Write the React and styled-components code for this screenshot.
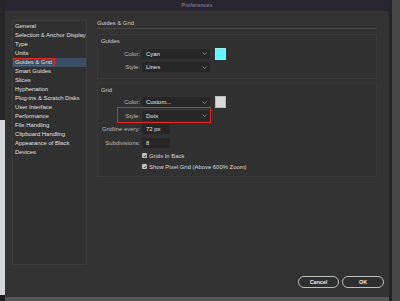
import React from "react";
import styled, { createGlobalStyle } from "styled-components";

const GlobalStyle = createGlobalStyle`
  html, body {
    margin: 0;
    padding: 0;
    background: #4a4a4a;
  }
  body {
    font-family: "Liberation Sans", Arial, sans-serif;
    font-size: 5.9px;
  }
`;

const Screen = styled.div`
  display: flex;
  width: 400px;
  height: 301px;
  overflow: hidden;
  background: #4a4a4a;
`;

const LeftEdge = styled.div`
  width: 5px;
  display: flex;
  flex-direction: column;

  & .dark {
    height: 120px;
    background: #262626;
  }
  & .light {
    flex: 1;
    background: #d4d5d8;
  }
  & .foot {
    height: 6px;
    background: #1d1d1d;
  }
`;

const Middle = styled.div`
  width: 384px;
  display: flex;
  flex-direction: column;
`;

const BottomStrip = styled.div`
  flex: 1;
  background: #555;
`;

const RightEdge = styled.div`
  flex: 1;
  border-left: 3px solid #242424;
  background: #474747;
`;

const Dialog = styled.div`
  height: 297px;
  display: flex;
  flex-direction: column;
  background: #323232;
`;

const TitleBar = styled.div`
  height: 11px;
  line-height: 11px;
  text-align: center;
  background: #2a2631;
  color: #756f80;
  font-weight: bold;
  font-size: 5.4px;
`;

const Body = styled.div`
  display: flex;
  padding: 9px 0 0 7px;
`;

const Sidebar = styled.ul`
  list-style: none;
  margin: 0;
  padding: 1px 0 0;
  width: 73px;
  height: 242px;
  border: 1px solid #3c3c3c;
  background: #303030;
`;

const NavItem = styled.li`
  position: relative;
  height: 9px;
  line-height: 9px;
  padding-left: 2px;
  color: #e0e0e0;
  white-space: nowrap;
  background: ${(p) => (p.$active ? "#3b4e64" : "transparent")};
`;

const Mark = styled.span`
  position: absolute;
  border: 1.5px solid #e2291f;
  pointer-events: none;
`;

const Content = styled.div`
  margin-left: 10px;
  width: 280px;
`;

const Heading = styled.div`
  line-height: 7px;
  padding-bottom: 1px;
  color: #d2d2d2;
  border-bottom: 1px solid #474747;
`;

const Group = styled.section`
  margin-top: ${(p) => p.$gap || 5}px;
  padding: 3px 0 5px 3px;
  border: 1px solid #393939;
  background: #313131;
`;

const GroupLabel = styled.div`
  line-height: 7px;
  color: #cfcfcf;
`;

const Rows = styled.div`
  display: flex;
  flex-direction: column;
  gap: 2.5px;
  margin-top: 3px;
`;

const Row = styled.div`
  position: relative;
  display: flex;
  align-items: center;
  height: 11px;
`;

const Label = styled.span`
  width: 39px;
  margin-right: 2px;
  text-align: right;
  color: #b9b9b9;
  white-space: nowrap;
`;

const Select = styled.div`
  position: relative;
  width: 64px;
  height: 10px;
  line-height: 10px;
  padding-left: 4px;
  background: #262626;
  border-radius: 1px;
  color: #e8e8e8;

  & svg {
    position: absolute;
    right: 3px;
    top: 3.5px;
  }
`;

const Field = styled.div`
  width: 24px;
  height: 10px;
  line-height: 10px;
  padding-left: 4px;
  background: #262626;
  border-radius: 1px;
  color: #e8e8e8;
`;

const Swatch = styled.span`
  margin-left: 5px;
  width: 9px;
  height: 10px;
  border: 1px solid ${(p) => p.$edge};
  background: ${(p) => p.$color};
`;

const CheckRow = styled.div`
  display: flex;
  align-items: center;
  height: 9px;
  padding-left: 41px;
  gap: 2px;
  color: #dcdcdc;
  margin-top: ${(p) => p.$top || 0}px;
`;

const Box = styled.span`
  display: flex;
  align-items: center;
  justify-content: center;
  width: 5px;
  height: 5px;
  border-radius: 1px;
  background: #c4c4c4;
`;

const Footer = styled.div`
  display: flex;
  justify-content: flex-end;
  gap: 3px;
  margin-top: 11px;
  padding-right: 5px;
`;

const Button = styled.button`
  width: ${(p) => p.$w}px;
  height: 12px;
  padding: 0;
  border: 1px solid #bdbdbd;
  border-radius: 6px;
  background: #2f2f2f;
  color: #ececec;
  font-family: inherit;
  font-size: 5.4px;
  font-weight: bold;
`;

const Chevron = () => (
  <svg width="5" height="3" viewBox="0 0 5 3">
    <polyline points="0.5,0.5 2.5,2.5 4.5,0.5" fill="none" stroke="#9a9a9a" strokeWidth="0.8" />
  </svg>
);

const Check = () => (
  <svg width="4" height="4" viewBox="0 0 4 4">
    <polyline points="0.6,2 1.6,3 3.4,0.8" fill="none" stroke="#2a2a2a" strokeWidth="0.8" />
  </svg>
);

const pages = [
  "General",
  "Selection & Anchor Display",
  "Type",
  "Units",
  "Guides & Grid",
  "Smart Guides",
  "Slices",
  "Hyphenation",
  "Plug-ins & Scratch Disks",
  "User Interface",
  "Performance",
  "File Handling",
  "Clipboard Handling",
  "Appearance of Black",
  "Devices",
];

export default function App() {
  return (
    <>
      <GlobalStyle />
      <Screen>
        <LeftEdge>
          <div className="dark" />
          <div className="light" />
          <div className="foot" />
        </LeftEdge>
        <Middle>
          <Dialog>
            <TitleBar>Preferences</TitleBar>
            <Body>
              <Sidebar>
                {pages.map((p) => (
                  <NavItem key={p} $active={p === "Guides & Grid"}>
                    {p}
                    {p === "Guides & Grid" && (
                      <Mark style={{ left: 0, top: 0, width: 40, height: 6 }} />
                    )}
                  </NavItem>
                ))}
              </Sidebar>
              <Content>
                <Heading>Guides &amp; Grid</Heading>
                <Group>
                  <GroupLabel>Guides</GroupLabel>
                  <Rows>
                    <Row>
                      <Label>Color:</Label>
                      <Select>
                        Cyan
                        <Chevron />
                      </Select>
                      <Swatch $color="#5ef6fc" $edge="#9ee" />
                    </Row>
                    <Row>
                      <Label>Style:</Label>
                      <Select>
                        Lines
                        <Chevron />
                      </Select>
                    </Row>
                  </Rows>
                </Group>
                <Group $gap={4}>
                  <GroupLabel>Grid</GroupLabel>
                  <Rows>
                    <Row>
                      <Label>Color:</Label>
                      <Select>
                        Custom...
                        <Chevron />
                      </Select>
                      <Swatch $color="#d9d9d9" $edge="#bbb" />
                    </Row>
                    <Row>
                      <Label>Style:</Label>
                      <Select>
                        Dots
                        <Chevron />
                      </Select>
                      <Mark style={{ left: 16, top: -3, width: 92, height: 14 }} />
                    </Row>
                    <Row>
                      <Label>Gridline every:</Label>
                      <Field>72 px</Field>
                    </Row>
                    <Row>
                      <Label>Subdivisions:</Label>
                      <Field>8</Field>
                    </Row>
                  </Rows>
                  <CheckRow $top={3}>
                    <Box>
                      <Check />
                    </Box>
                    Grids In Back
                  </CheckRow>
                  <CheckRow $top={2}>
                    <Box>
                      <Check />
                    </Box>
                    Show Pixel Grid (Above 600% Zoom)
                  </CheckRow>
                </Group>
              </Content>
            </Body>
            <Footer>
              <Button $w={41}>Cancel</Button>
              <Button $w={42}>OK</Button>
            </Footer>
          </Dialog>
          <BottomStrip />
        </Middle>
        <RightEdge />
      </Screen>
    </>
  );
}
